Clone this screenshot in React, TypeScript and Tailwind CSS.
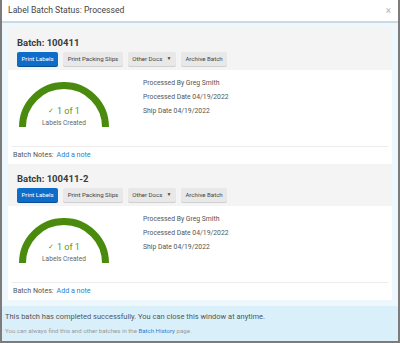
import React from "react";

function Gauge() {
  return (
    <div className="relative w-[92px] h-[46px] mt-[11px] ml-[10px] shrink-0">
      <svg width="92" height="46" viewBox="0 0 92 46" className="absolute left-0 top-0">
        <path d="M 4.5 46 A 41.5 41.5 0 0 1 87.5 46" fill="none" stroke="#4a8a0c" strokeWidth="7" />
      </svg>
      <div className="absolute left-0 right-0 top-[25px] flex justify-center items-center gap-[3px] text-[9px] leading-[10px] text-[#5b9a1c]">
        <span className="text-[7px]">✓</span>
        <span>1 of 1</span>
      </div>
      <div className="absolute left-0 right-0 top-[38px] text-center text-[6.6px] leading-[8px] text-[#666]">
        Labels Created
      </div>
    </div>
  );
}

function Btn({ children, primary }: { children: React.ReactNode; primary?: boolean }) {
  return (
    <div
      className={
        primary
          ? "h-[14px] px-[4.5px] flex items-center rounded-[2px] bg-[#0f6dca] text-white text-[6.1px] shadow-[0_1px_0_#0a4f93]"
          : "h-[14px] px-[4.5px] flex items-center rounded-[2px] bg-[#e8e8e8] text-[#444] text-[6.1px] shadow-[0_1px_0_#cfcfcf]"
      }
    >
      {children}
    </div>
  );
}

function Card({ id }: { id: string }) {
  return (
    <div className="h-[136px] flex flex-col">
      <div className="h-[42px] bg-[#f4f4f4] px-[9px] pt-[9px]">
        <div className="text-[9.5px] leading-[12px] font-bold text-[#3a3a3a]">Batch: {id}</div>
        <div className="flex gap-[5px] mt-[3px]">
          <Btn primary>Print Labels</Btn>
          <Btn>Print Packing Slips</Btn>
          <Btn>
            <span>Other Docs</span>
            <span className="ml-[4px] text-[5px]">▼</span>
          </Btn>
          <Btn>Archive Batch</Btn>
        </div>
      </div>
      <div className="flex-1 bg-white flex flex-col">
        <div className="h-[76px] flex items-start">
          <Gauge />
          <div className="ml-[33px] pt-[6px] flex flex-col text-[6.8px] leading-[14px] text-[#555]">
            <div>Processed By Greg Smith</div>
            <div>Processed Date 04/19/2022</div>
            <div>Ship Date 04/19/2022</div>
          </div>
        </div>
        <div className="mx-[4px] border-t border-[#ececec] h-[18px] flex items-center pl-px text-[7.1px]">
          <span className="text-[#555]">Batch Notes:</span>
          <span className="ml-[3px] text-[#2a7fd2]">Add a note</span>
        </div>
      </div>
    </div>
  );
}

export default function App() {
  return (
    <div className="w-[400px] h-[343px] bg-[#7c7c7c] font-['Roboto',sans-serif]">
      <div className="mx-[2px] h-[341px] bg-white flex flex-col">
        <div className="h-[23px] shrink-0 flex items-center justify-between pl-[6px] pr-[7px] border-b-2 border-[#cdd9e1]">
          <span className="text-[8.6px] text-[#444]">Label Batch Status: Processed</span>
          <span className="text-[10px] leading-none text-[#b5b5b5]">×</span>
        </div>
        <div className="flex-1 bg-[#eef7fc] flex flex-col">
          <div className="px-[6px] pt-[5px] pb-[6px]">
            <Card id="100411" />
            <Card id="100411-2" />
          </div>
          <div className="flex-1 bg-[#d9f0fb] pl-[3px] pt-[5px]">
            <div className="text-[7.5px] leading-[12px] text-[#555]">
              This batch has completed successfully. You can close this window at anytime.
            </div>
            <div className="mt-[2px] text-[6.1px] leading-[12px] text-[#999]">
              You can always find this and other batches in the{" "}
              <span className="text-[#2a7fd2]">Batch History</span> page.
            </div>
          </div>
        </div>
      </div>
    </div>
  );
}
